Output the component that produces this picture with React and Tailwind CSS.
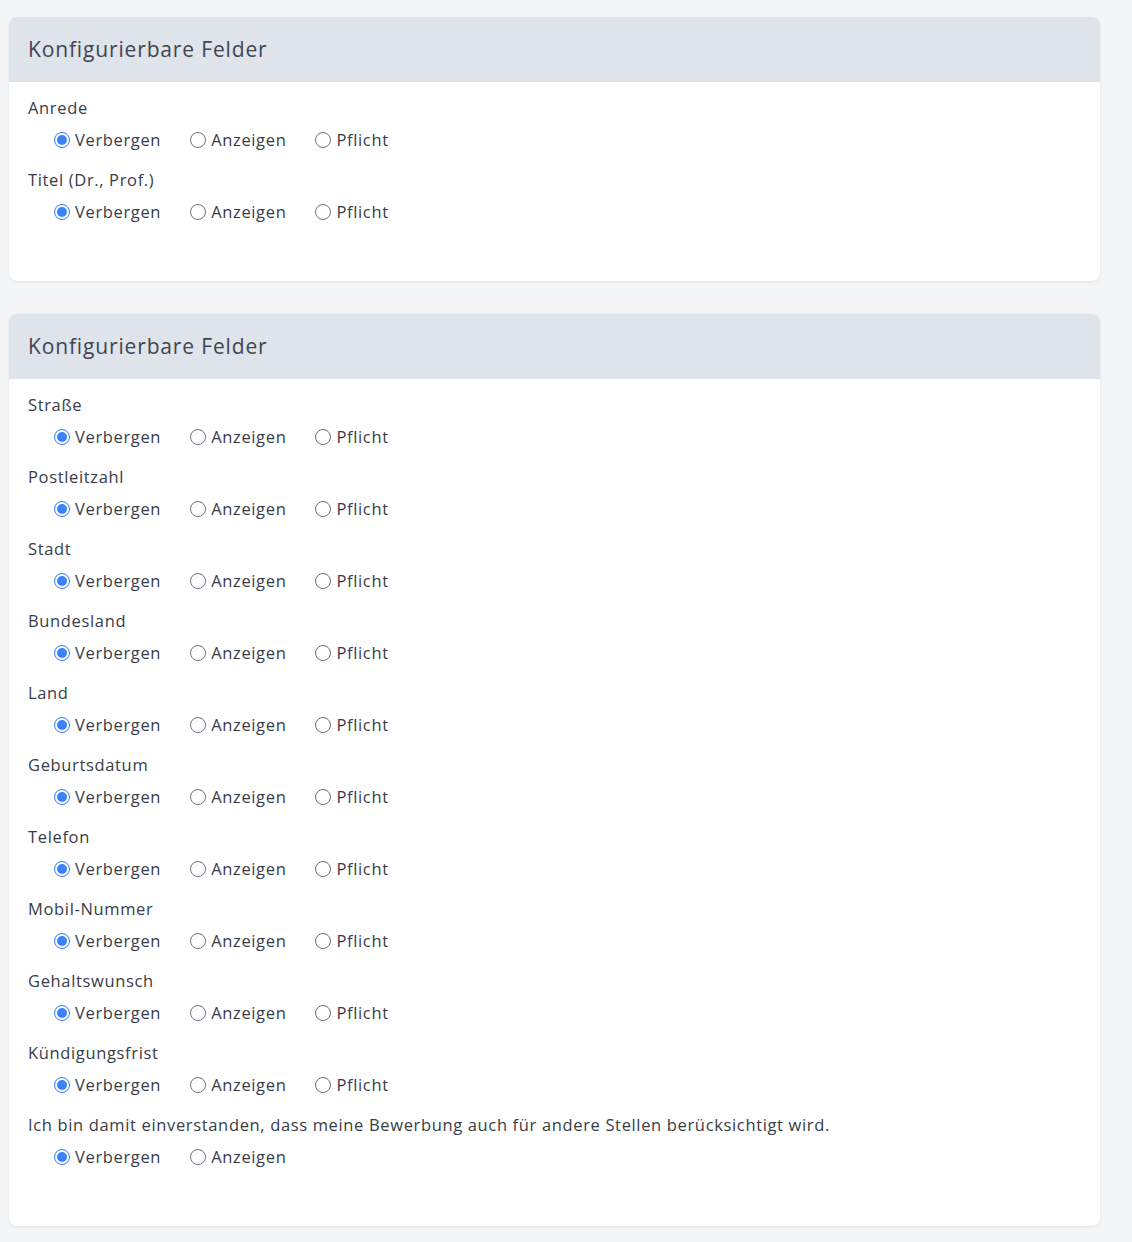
import { useState } from "react";

const FONT = { fontFamily: '"Open Sans", "Noto Sans", sans-serif' };

const OPTIONS = ["Verbergen", "Anzeigen", "Pflicht"];

function Radio({ checked, label, onChange }) {
  return (
    <label className="flex items-center gap-[5px] cursor-pointer" onClick={onChange}>
      {checked ? (
        <span className="w-[16px] h-[16px] rounded-full border border-[#3b82f6] bg-[#3b82f6] flex items-center justify-center">
          <span className="w-[10px] h-[10px] rounded-full bg-[#3b82f6] ring-2 ring-white"></span>
        </span>
      ) : (
        <span className="w-[16px] h-[16px] rounded-full border border-[#6b7280] bg-white"></span>
      )}
      <span>{label}</span>
    </label>
  );
}

function Field({ label, options = OPTIONS }) {
  const [value, setValue] = useState("Verbergen");
  return (
    <div className="mb-[16px]">
      <div className="h-[24px] leading-[24px]">{label}</div>
      <div className="mt-[8px] h-[24px] flex items-center gap-[29px] pl-[26px]">
        {options.map((o) => (
          <Radio key={o} label={o} checked={value === o} onChange={() => setValue(o)} />
        ))}
      </div>
    </div>
  );
}

function Card({ fields }) {
  return (
    <div className="bg-white rounded-[8px] shadow-[0_1px_3px_rgba(0,0,0,0.08)] overflow-hidden">
      <div className="h-[65px] bg-[#dfe3ea] flex items-center px-[19px] text-[21px] tracking-[0.85px] text-[#3f4551]">
        Konfigurierbare Felder
      </div>
      <div className="px-[19px] pt-[14px] pb-[41px]">
        {fields.map((f) => (
          <Field key={f.label} label={f.label} options={f.options} />
        ))}
      </div>
    </div>
  );
}

export default function App() {
  const card1 = [{ label: "Anrede" }, { label: "Titel (Dr., Prof.)" }];
  const card2 = [
    { label: "Straße" },
    { label: "Postleitzahl" },
    { label: "Stadt" },
    { label: "Bundesland" },
    { label: "Land" },
    { label: "Geburtsdatum" },
    { label: "Telefon" },
    { label: "Mobil-Nummer" },
    { label: "Gehaltswunsch" },
    { label: "Kündigungsfrist" },
    {
      label:
        "Ich bin damit einverstanden, dass meine Bewerbung auch für andere Stellen berücksichtigt wird.",
      options: ["Verbergen", "Anzeigen"],
    },
  ];
  return (
    <div
      className="min-h-screen bg-[#f4f5f7] pt-[17px] pl-[9px] pr-[32px] pb-[16px] text-[16.5px] tracking-[0.65px] text-[#373d48]"
      style={FONT}
    >
      <div className="flex flex-col gap-[33px]">
        <Card fields={card1} />
        <Card fields={card2} />
      </div>
    </div>
  );
}
